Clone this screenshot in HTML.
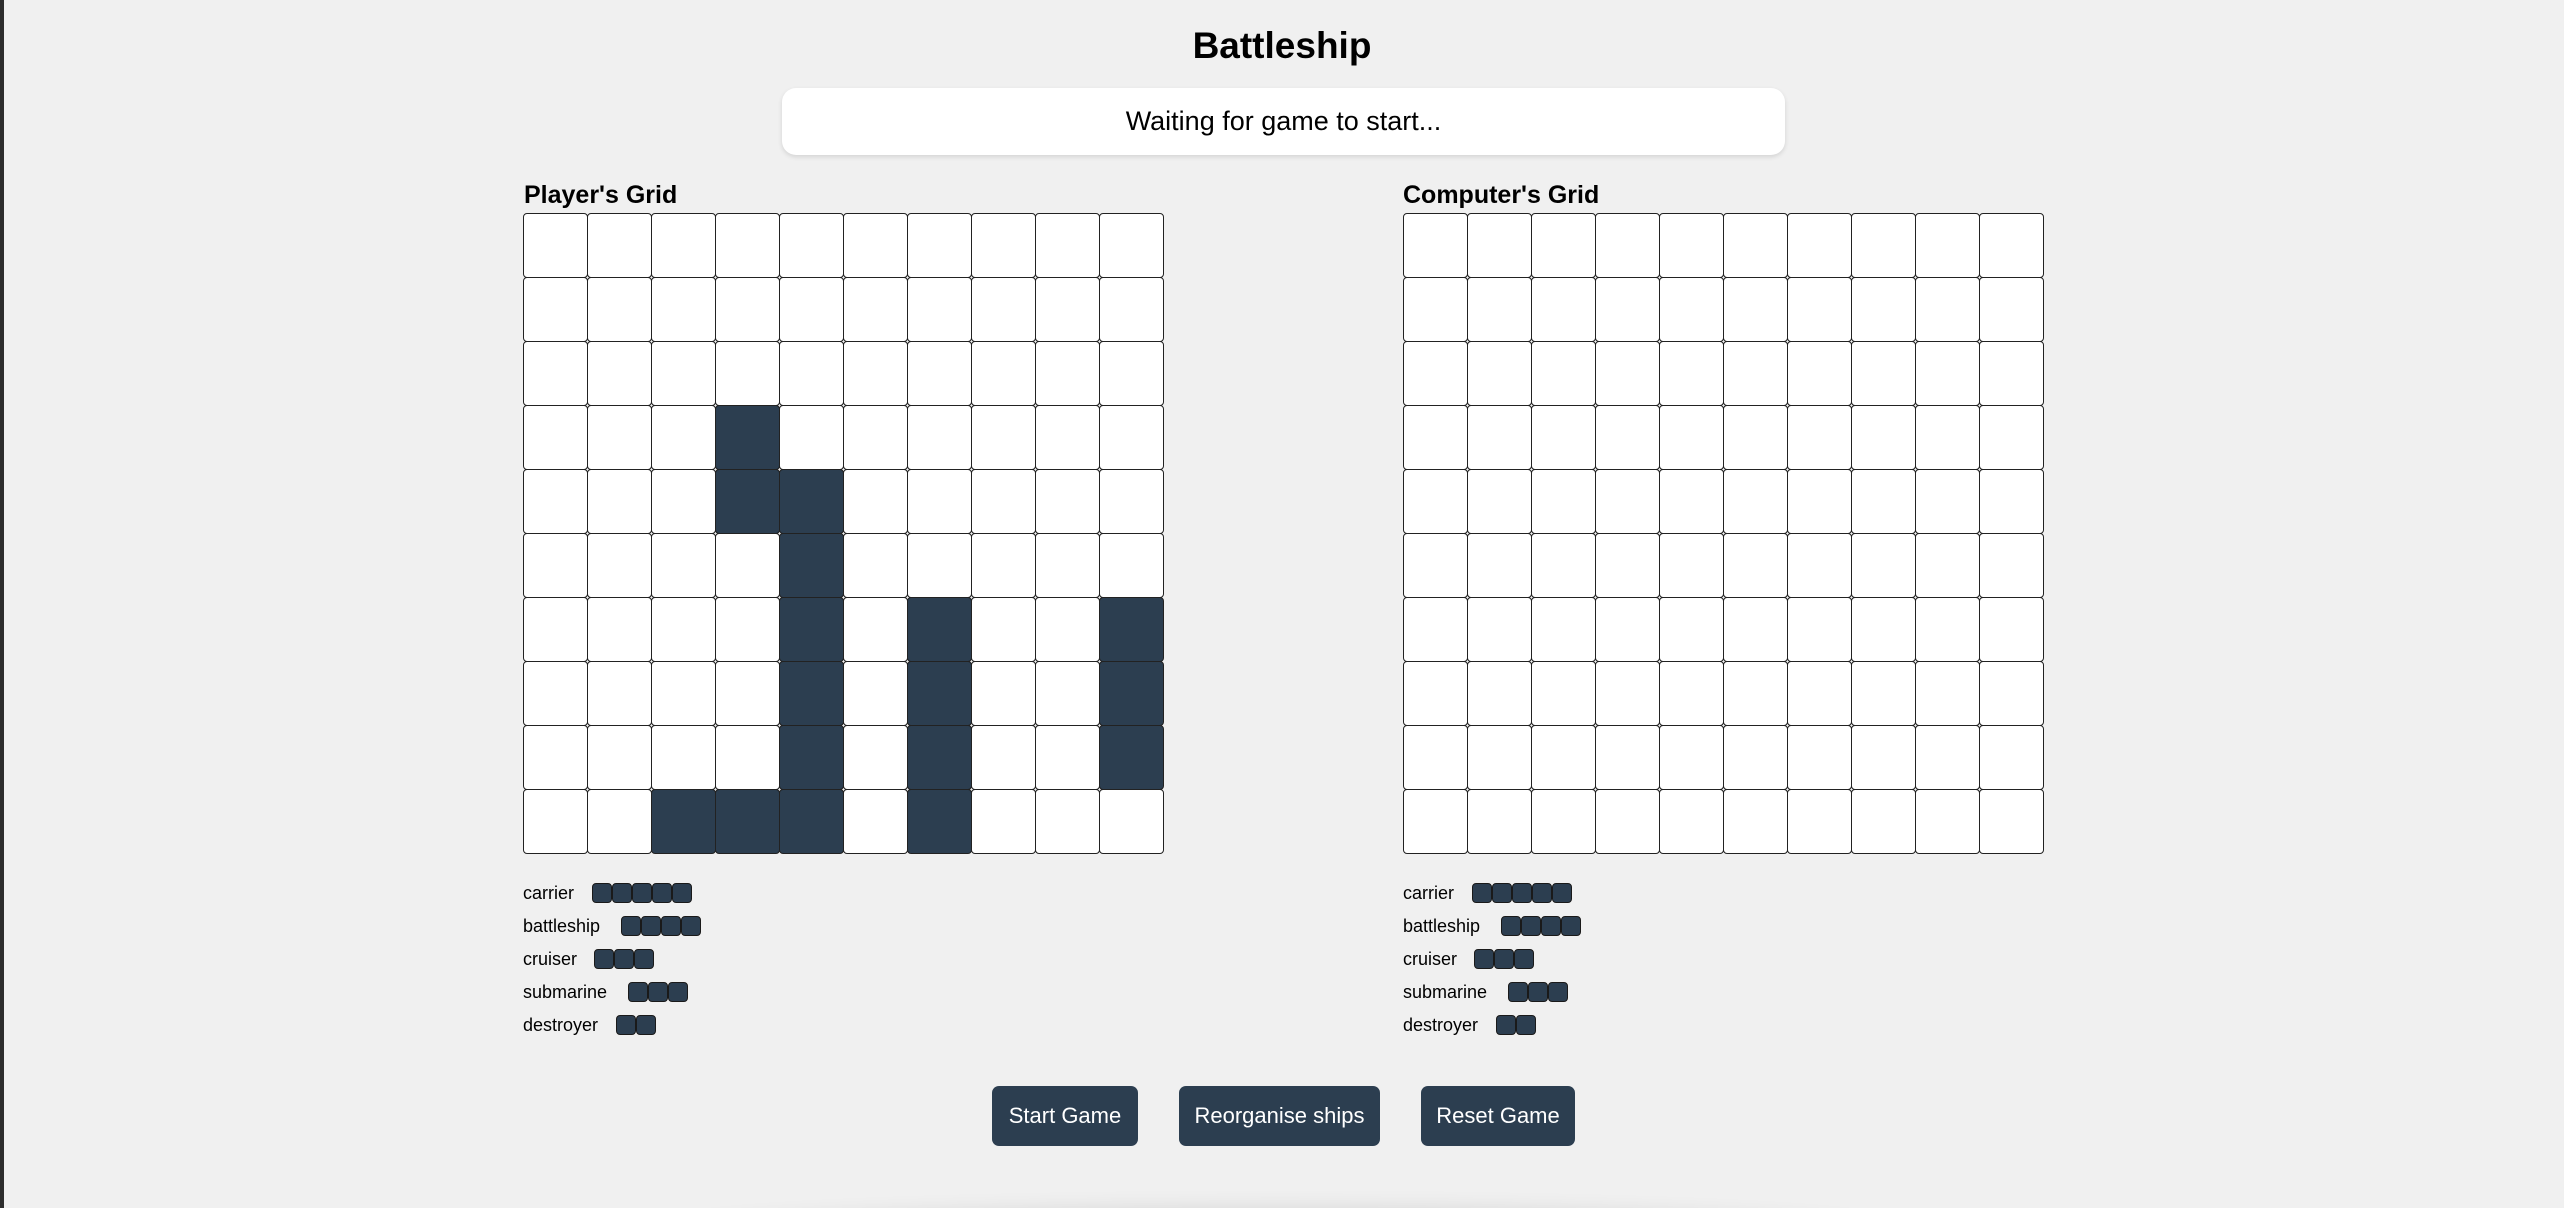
<!DOCTYPE html>
<html><head><meta charset="utf-8"><style>
*{box-sizing:border-box;margin:0;padding:0}
html,body{width:2564px;height:1208px;overflow:hidden}
body{background:#f0f0f0;font-family:"Liberation Sans",sans-serif;color:#000}
#wrap{position:relative;width:2564px;height:1208px;overflow:hidden}
.lb{position:absolute;left:0;top:0;width:4px;height:1208px;background:#2d2d2d}
h1{position:absolute;top:25px;left:0;width:2564px;text-align:center;font-size:37px;font-weight:bold}
.status{position:absolute;left:782px;top:88px;width:1003px;height:67px;background:#fff;border-radius:14px;box-shadow:0 2px 5px rgba(0,0,0,.12);text-align:center;line-height:67px;font-size:27px}
.lbl{position:absolute;top:181px;font-size:25px;font-weight:bold}
.grid{position:absolute;top:213px;width:641px;height:641px;display:grid;grid-template-columns:repeat(10,64px);grid-template-rows:repeat(10,64px);gap:0}
.c{border:1.5px solid #222;border-radius:4px;background:#fff;margin:0 -0.5px -0.5px 0}
.s{background:#2c3e50}
.sh{position:absolute;font-size:18px;height:20px;line-height:20px}
.blk{position:absolute;top:0;display:flex}
.blk i{width:20px;height:20px;background:#2c3e50;border:1px solid #1a1a1a;border-radius:4px;display:block}
.btn{position:absolute;top:1086px;height:60px;background:#2c3e50;color:#fff;border-radius:7px;font-size:22px;text-align:center;line-height:60px}
.shadow{position:absolute;left:680px;top:1222px;width:1200px;height:40px;border-radius:50%;box-shadow:0 -4px 24px 6px rgba(0,0,0,.14)}
</style></head><body><div id="wrap">
<div class="lb"></div>
<h1>Battleship</h1>
<div class="status">Waiting for game to start...</div>
<div class="lbl" style="left:524px">Player's Grid</div>
<div class="lbl" style="left:1403px">Computer's Grid</div>
<div class="grid" id="g1" style="left:523px"></div>
<div class="grid" id="g2" style="left:1403px"></div>
<div id="ships"></div>
<div class="btn" style="left:992px;width:146px">Start Game</div>
<div class="btn" style="left:1179px;width:201px">Reorganise ships</div>
<div class="btn" style="left:1421px;width:154px">Reset Game</div>
<div class="shadow"></div>
</div>
<script>
var sh=["3,3","4,3","4,4","5,4","6,4","7,4","8,4","9,2","9,3","9,4","6,6","7,6","8,6","9,6","6,9","7,9","8,9"];
function g(id,ships){var h="";for(var r=0;r<10;r++)for(var c=0;c<10;c++){h+='<div class="c'+(ships&&ships.indexOf(r+","+c)>=0?" s":"")+'"></div>'}document.getElementById(id).innerHTML=h}
g("g1",sh);g("g2",null);
var L=[["carrier",5,592],["battleship",4,621],["cruiser",3,594],["submarine",3,628],["destroyer",2,616]];
var h="";[523,1403].forEach(function(x0){L.forEach(function(s,i){var b="";for(var k=0;k<s[1];k++)b+="<i></i>";h+='<div class="sh" style="left:'+x0+'px;top:'+(883+i*33)+'px">'+s[0]+'<div class="blk" style="left:'+(s[2]-523)+'px">'+b+'</div></div>'})});
document.getElementById("ships").innerHTML=h;
</script>
</body></html>
